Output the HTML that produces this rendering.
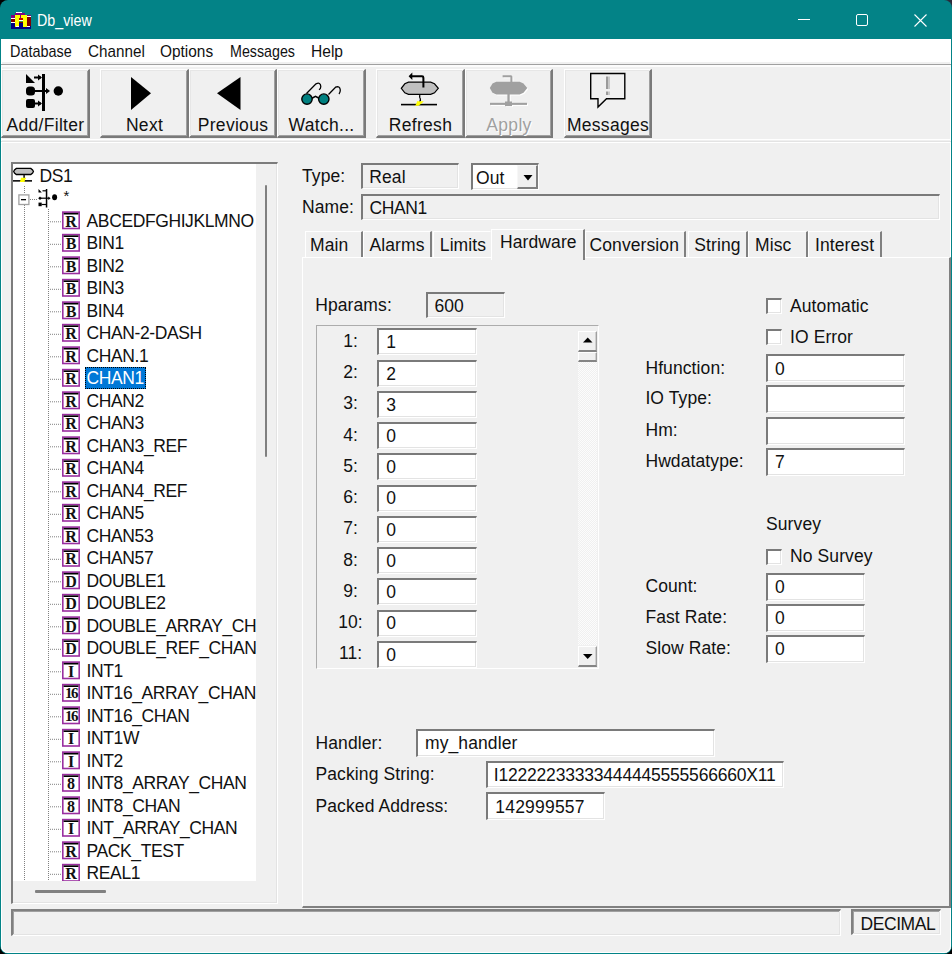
<!DOCTYPE html><html><head><meta charset="utf-8"><style>
*{margin:0;padding:0;box-sizing:border-box}
html,body{width:952px;height:954px;overflow:hidden;background:#000}
body{position:relative;font-family:"Liberation Sans",sans-serif;color:#111}
.a{position:absolute}
.t{position:absolute;white-space:nowrap}
.sk{border-style:solid;border-width:2px 1px 1px 2px;border-color:#7a7a7a #fff #fff #7a7a7a;box-shadow:inset -1px -1px 0 #e3e3e3}
.rz{border-style:solid;border-width:1px 2px 2px 1px;border-color:#fff #7a7a7a #7a7a7a #fff;background:#f0f0f0;box-shadow:inset 1px 1px 0 #e6e6e6, inset -1px -1px 0 #a0a0a0}
svg{position:absolute;overflow:visible}
</style></head><body>
<div class="a" style="left:930px;top:0px;width:22px;height:22px;background:#2b2a3a"></div>
<div class="a" style="left:0;top:0;width:952px;height:954px;background:#038387;border-radius:8px"></div>
<div class="a" style="left:1px;top:39px;width:950px;height:914px;background:#f0f0f0;border-radius:0 0 7px 7px"></div>
<div class="a" style="left:1px;top:39px;width:950px;height:914px;border-radius:0 0 7px 7px;box-shadow:inset 1px 0 0 #fff, inset -1px 0 0 #fff, inset 0 -1px 0 #fff"></div>
<svg style="left:11px;top:12px" width="20" height="17" viewBox="0 0 20 17" shape-rendering="crispEdges">
<rect x="0" y="5" width="20" height="6" fill="#800000"/>
<rect x="16" y="10" width="4" height="4" fill="#800000"/>
<rect x="0" y="11" width="16" height="6" fill="#000080"/>
<rect x="16" y="14" width="4" height="3" fill="#000080"/>
<rect x="4" y="1" width="10" height="2" fill="#800080"/>
<rect x="0" y="3" width="4" height="3" fill="#800080"/>
<rect x="16" y="3" width="4" height="2" fill="#800080"/>
<rect x="0" y="6" width="4" height="1" fill="#fff"/>
<rect x="16" y="4" width="4" height="1" fill="#fff"/>
<rect x="5" y="0" width="6" height="1" fill="#fff"/>
<rect x="4" y="3" width="4" height="12" fill="#ffff00"/>
<rect x="12" y="3" width="4" height="12" fill="#ffff00"/>
<rect x="8" y="3" width="4" height="3" fill="#ffff00"/>
<rect x="9" y="3" width="1" height="3" fill="#800080"/>
<rect x="8" y="6" width="4" height="2" fill="#c00000"/>
<rect x="8" y="8" width="4" height="1" fill="#fff"/>
<rect x="8" y="9" width="4" height="1" fill="#40a040"/>
<rect x="5" y="14" width="3" height="1" fill="#fff"/>
<rect x="16" y="14" width="3" height="1" fill="#fff"/>
<rect x="0" y="10" width="4" height="1" fill="#fff"/>
</svg>
<div class="t" style="left:37px;top:11px;font-size:15.7px;line-height:20px;letter-spacing:0px;color:#fff;transform:scaleX(0.91);transform-origin:0 0;">Db_view</div>
<div class="a" style="left:798px;top:19px;width:12px;height:1px;background:#fff"></div>
<div class="a" style="left:856px;top:14px;width:12px;height:12px;border:1px solid #fff;border-radius:2px"></div>
<svg style="left:914px;top:14px" width="13" height="13" viewBox="0 0 13 13"><path d="M0.5 0.5 L12.5 12.5 M12.5 0.5 L0.5 12.5" stroke="#fff" stroke-width="1.1"/></svg>
<div class="a" style="left:1px;top:39px;width:950px;height:23px;background:#fff"></div>
<div class="a" style="left:1px;top:64px;width:950px;height:1px;background:#a0a0a0"></div>
<div class="a" style="left:1px;top:65px;width:950px;height:2px;background:#fcfcfc"></div>
<div class="t" style="left:9.5px;top:41px;font-size:16.4px;line-height:20px;letter-spacing:0px;transform:scaleX(0.88);transform-origin:0 0;">Database</div>
<div class="t" style="left:87.5px;top:41px;font-size:16.4px;line-height:20px;letter-spacing:0px;transform:scaleX(0.93);transform-origin:0 0;">Channel</div>
<div class="t" style="left:159.5px;top:41px;font-size:16.4px;line-height:20px;letter-spacing:0px;transform:scaleX(0.94);transform-origin:0 0;">Options</div>
<div class="t" style="left:229.5px;top:41px;font-size:16.4px;line-height:20px;letter-spacing:0px;transform:scaleX(0.87);transform-origin:0 0;">Messages</div>
<div class="t" style="left:310.5px;top:41px;font-size:16.4px;line-height:20px;letter-spacing:0px;transform:scaleX(0.95);transform-origin:0 0;">Help</div>
<div class="a rz" style="left:1px;top:69px;width:89px;height:69px"></div>
<div class="t" style="left:1px;width:89px;text-align:center;top:115px;font-size:17.5px;line-height:20px;letter-spacing:0.3px;">Add/Filter</div>
<div class="a rz" style="left:100px;top:69px;width:89px;height:69px"></div>
<div class="t" style="left:100px;width:89px;text-align:center;top:115px;font-size:17.5px;line-height:20px;letter-spacing:0.3px;">Next</div>
<div class="a rz" style="left:189px;top:69px;width:88px;height:69px"></div>
<div class="t" style="left:189px;width:88px;text-align:center;top:115px;font-size:17.5px;line-height:20px;letter-spacing:0.3px;">Previous</div>
<div class="a rz" style="left:277px;top:69px;width:89px;height:69px"></div>
<div class="t" style="left:277px;width:89px;text-align:center;top:115px;font-size:17.5px;line-height:20px;letter-spacing:0.3px;">Watch...</div>
<div class="a rz" style="left:376px;top:69px;width:89px;height:69px"></div>
<div class="t" style="left:376px;width:89px;text-align:center;top:115px;font-size:17.5px;line-height:20px;letter-spacing:0.3px;">Refresh</div>
<div class="a rz" style="left:465px;top:69px;width:88px;height:69px"></div>
<div class="t" style="left:465px;width:88px;text-align:center;top:115px;font-size:17.5px;line-height:20px;letter-spacing:0.3px;color:#a0a0a0;text-shadow:1px 1px 0 #fff;">Apply</div>
<div class="a rz" style="left:564px;top:69px;width:88px;height:69px"></div>
<div class="t" style="left:564px;width:88px;text-align:center;top:115px;font-size:17.5px;line-height:20px;letter-spacing:0.3px;">Messages</div>
<div class="a" style="left:1px;top:139px;width:950px;height:1px;background:#fff"></div>
<div class="a" style="left:1px;top:141px;width:950px;height:1px;background:#e3e3e3"></div>
<div class="a" style="left:1px;top:142px;width:950px;height:1px;background:#fff"></div>
<svg style="left:0;top:0" width="952" height="954">
<path d="M26 74 L35 83 L26 83Z" fill="#000"/>
<path d="M34 77.5 H41" stroke="#000" stroke-width="2"/><path d="M38 74.5 L42 77.5 L38 80.5Z" fill="#000"/>
<rect x="42" y="74" width="3" height="37" fill="#000"/>
<rect x="26" y="86.5" width="9" height="9" rx="3.5" fill="#000"/>
<path d="M34 91 H48" stroke="#000" stroke-width="2"/><path d="M46 88 L50 91 L46 94Z" fill="#000"/>
<circle cx="58.3" cy="91" r="4.7" fill="#000"/>
<rect x="26" y="99" width="9" height="9" rx="2" fill="#000"/>
<path d="M34 103.5 H41" stroke="#000" stroke-width="2"/><path d="M38 100.5 L42 103.5 L38 106.5Z" fill="#000"/>
</svg>
<svg style="left:0;top:0" width="952" height="954"><path d="M131 77 L151 93.3 L131 110Z" fill="#000"/><path d="M240.5 77 L217 93.3 L240.5 110Z" fill="#000"/></svg>
<svg style="left:0;top:0" width="952" height="954">
<path d="M306.5 93.5 L316 83.8 Q320.5 81.8 320.8 86.5 Q320.8 88.8 319 89.8" stroke="#000" stroke-width="1.3" fill="none"/>
<path d="M328.5 94.5 L335.5 87.2 Q339.8 85.5 340.3 90 Q340.3 92.5 339 94" stroke="#000" stroke-width="1.3" fill="none"/>
<path d="M311.5 98.5 L315.5 96.3 L319.5 98.5" stroke="#000" stroke-width="1.5" fill="none"/>
<circle cx="307" cy="99.1" r="5.2" fill="#008080" stroke="#000" stroke-width="1.4"/>
<circle cx="323.8" cy="99.1" r="5.2" fill="#008080" stroke="#000" stroke-width="1.4"/>
</svg>
<svg style="left:0;top:0" width="952" height="954">
<path d="M408.5 82.2 H430.7 L434.5 83.8 L438.3 88.3 L434.5 92.8 L430.7 94.4 H408.5 L404.8 92.8 L401.3 88.3 L404.8 83.8Z" fill="#c0c0c0" stroke="#000" stroke-width="1.2"/>
<path d="M411 76.3 H422 Q423.4 76.3 423.4 77.7 V87.5" stroke="#000" stroke-width="2" fill="none"/>
<path d="M408.6 76.3 L412.3 72.6 L412.3 80Z" fill="#000"/>
<path d="M419.8 95 Q419.2 97.5 420.3 98.8 Q421 100.5 419.3 101.8" stroke="#000" stroke-width="1.3" fill="none"/>
<rect x="401" y="103.8" width="36" height="1.6" fill="#000"/>
<path d="M417 101.3 H423.8 L421.5 103.5 L418.5 105.8 H415 L416.5 103.5Z" fill="#ffff00"/>
</svg>
<svg style="left:1px;top:1px" width="952" height="954" fill="#fff"><path d="M496.3 81.8 H519.7 L523.5 83.5 L527.3 88.1 L523.5 92.8 L519.7 94.4 H496.3 L492.5 92.8 L489.8 88.1 L492.5 83.5Z"/>
<path d="M502.6 75.2 H510.9 Q512.4 75.2 512.4 76.7 V82.5 H510.4 V77.3 H502.6Z"/>
<rect x="507.4" y="94" width="2.3" height="9"/>
<rect x="490" y="102.8" width="37" height="2.1"/>
<rect x="505" y="101.5" width="7" height="4.6"/></svg>
<svg style="left:0;top:0" width="952" height="954" fill="#a0a0a0"><path d="M496.3 81.8 H519.7 L523.5 83.5 L527.3 88.1 L523.5 92.8 L519.7 94.4 H496.3 L492.5 92.8 L489.8 88.1 L492.5 83.5Z"/>
<path d="M502.6 75.2 H510.9 Q512.4 75.2 512.4 76.7 V82.5 H510.4 V77.3 H502.6Z"/>
<rect x="507.4" y="94" width="2.3" height="9"/>
<rect x="490" y="102.8" width="37" height="2.1"/>
<rect x="505" y="101.5" width="7" height="4.6"/></svg>
<svg style="left:0;top:0" width="952" height="954">
<path d="M590.7 73.5 H624.8 V98.7 H606.5 L598 107 V98.7 H590.7Z" fill="none" stroke="#000" stroke-width="1.4"/>
<rect x="606" y="76.5" width="2" height="12.5" fill="#9a9a9a"/><rect x="608" y="76.5" width="2" height="12.5" fill="#c8c8c8"/>
<rect x="606" y="91.5" width="2" height="3.5" fill="#9a9a9a"/><rect x="608" y="91.5" width="2" height="3.5" fill="#c8c8c8"/>
</svg>
<div class="a" style="left:11px;top:162px;width:267px;height:742px;border-style:solid;border-width:2px 1px 1px 2px;border-color:#7c7c7c #fff #fff #7c7c7c;box-shadow:inset -1px -1px 0 #e3e3e3;background:#f0f0f0"></div>
<div class="a" style="left:13px;top:164px;width:243px;height:717px;background:#fff"></div>
<div class="a" style="left:265px;top:185px;width:2.2px;height:272px;background:#808080;border-radius:1px"></div>
<div class="a" style="left:35px;top:890px;width:71px;height:2.5px;background:#808080;border-radius:1px"></div>
<div class="a" style="left:13px;top:164px;width:243px;height:717px;overflow:hidden">
<svg style="left:0;top:0" width="243" height="717"><path d="M11.5 22 V30 M11.5 41 V717" stroke="#808080" stroke-width="1" stroke-dasharray="1 1" fill="none"/><path d="M35.5 45 V717" stroke="#808080" stroke-width="1" stroke-dasharray="1 1"/><path d="M17 35.5 H25" stroke="#808080" stroke-width="1" stroke-dasharray="1 1"/><rect x="5.899999999999999" y="30.900000000000006" width="10" height="9.6" fill="#fff" stroke="#a0a0a0" stroke-width="1.3"/><rect x="8" y="35" width="5" height="1.3" fill="#000"/><path d="M37 57.8 H49" stroke="#808080" stroke-width="1" stroke-dasharray="1 1"/><rect x="49.8" y="48.1" width="16.4" height="16.4" fill="#fff" stroke="#9a2fa0" stroke-width="1.6"/><rect x="50.6" y="48.9" width="14.8" height="1.6" fill="#000"/><path d="M37 80.3 H49" stroke="#808080" stroke-width="1" stroke-dasharray="1 1"/><rect x="49.8" y="70.6" width="16.4" height="16.4" fill="#fff" stroke="#9a2fa0" stroke-width="1.6"/><rect x="50.6" y="71.4" width="14.8" height="1.6" fill="#000"/><path d="M37 102.8 H49" stroke="#808080" stroke-width="1" stroke-dasharray="1 1"/><rect x="49.8" y="93.1" width="16.4" height="16.4" fill="#fff" stroke="#9a2fa0" stroke-width="1.6"/><rect x="50.6" y="93.9" width="14.8" height="1.6" fill="#000"/><path d="M37 125.3 H49" stroke="#808080" stroke-width="1" stroke-dasharray="1 1"/><rect x="49.8" y="115.6" width="16.4" height="16.4" fill="#fff" stroke="#9a2fa0" stroke-width="1.6"/><rect x="50.6" y="116.4" width="14.8" height="1.6" fill="#000"/><path d="M37 147.8 H49" stroke="#808080" stroke-width="1" stroke-dasharray="1 1"/><rect x="49.8" y="138.1" width="16.4" height="16.4" fill="#fff" stroke="#9a2fa0" stroke-width="1.6"/><rect x="50.6" y="138.9" width="14.8" height="1.6" fill="#000"/><path d="M37 170.3 H49" stroke="#808080" stroke-width="1" stroke-dasharray="1 1"/><rect x="49.8" y="160.6" width="16.4" height="16.4" fill="#fff" stroke="#9a2fa0" stroke-width="1.6"/><rect x="50.6" y="161.4" width="14.8" height="1.6" fill="#000"/><path d="M37 192.8 H49" stroke="#808080" stroke-width="1" stroke-dasharray="1 1"/><rect x="49.8" y="183.1" width="16.4" height="16.4" fill="#fff" stroke="#9a2fa0" stroke-width="1.6"/><rect x="50.6" y="183.9" width="14.8" height="1.6" fill="#000"/><path d="M37 215.3 H49" stroke="#808080" stroke-width="1" stroke-dasharray="1 1"/><rect x="49.8" y="205.6" width="16.4" height="16.4" fill="#fff" stroke="#9a2fa0" stroke-width="1.6"/><rect x="50.6" y="206.4" width="14.8" height="1.6" fill="#000"/><path d="M37 237.8 H49" stroke="#808080" stroke-width="1" stroke-dasharray="1 1"/><rect x="49.8" y="228.1" width="16.4" height="16.4" fill="#fff" stroke="#9a2fa0" stroke-width="1.6"/><rect x="50.6" y="228.9" width="14.8" height="1.6" fill="#000"/><path d="M37 260.3 H49" stroke="#808080" stroke-width="1" stroke-dasharray="1 1"/><rect x="49.8" y="250.6" width="16.4" height="16.4" fill="#fff" stroke="#9a2fa0" stroke-width="1.6"/><rect x="50.6" y="251.4" width="14.8" height="1.6" fill="#000"/><path d="M37 282.8 H49" stroke="#808080" stroke-width="1" stroke-dasharray="1 1"/><rect x="49.8" y="273.1" width="16.4" height="16.4" fill="#fff" stroke="#9a2fa0" stroke-width="1.6"/><rect x="50.6" y="273.9" width="14.8" height="1.6" fill="#000"/><path d="M37 305.3 H49" stroke="#808080" stroke-width="1" stroke-dasharray="1 1"/><rect x="49.8" y="295.6" width="16.4" height="16.4" fill="#fff" stroke="#9a2fa0" stroke-width="1.6"/><rect x="50.6" y="296.4" width="14.8" height="1.6" fill="#000"/><path d="M37 327.8 H49" stroke="#808080" stroke-width="1" stroke-dasharray="1 1"/><rect x="49.8" y="318.1" width="16.4" height="16.4" fill="#fff" stroke="#9a2fa0" stroke-width="1.6"/><rect x="50.6" y="318.9" width="14.8" height="1.6" fill="#000"/><path d="M37 350.3 H49" stroke="#808080" stroke-width="1" stroke-dasharray="1 1"/><rect x="49.8" y="340.6" width="16.4" height="16.4" fill="#fff" stroke="#9a2fa0" stroke-width="1.6"/><rect x="50.6" y="341.4" width="14.8" height="1.6" fill="#000"/><path d="M37 372.8 H49" stroke="#808080" stroke-width="1" stroke-dasharray="1 1"/><rect x="49.8" y="363.1" width="16.4" height="16.4" fill="#fff" stroke="#9a2fa0" stroke-width="1.6"/><rect x="50.6" y="363.9" width="14.8" height="1.6" fill="#000"/><path d="M37 395.3 H49" stroke="#808080" stroke-width="1" stroke-dasharray="1 1"/><rect x="49.8" y="385.6" width="16.4" height="16.4" fill="#fff" stroke="#9a2fa0" stroke-width="1.6"/><rect x="50.6" y="386.4" width="14.8" height="1.6" fill="#000"/><path d="M37 417.8 H49" stroke="#808080" stroke-width="1" stroke-dasharray="1 1"/><rect x="49.8" y="408.1" width="16.4" height="16.4" fill="#fff" stroke="#9a2fa0" stroke-width="1.6"/><rect x="50.6" y="408.9" width="14.8" height="1.6" fill="#000"/><path d="M37 440.3 H49" stroke="#808080" stroke-width="1" stroke-dasharray="1 1"/><rect x="49.8" y="430.6" width="16.4" height="16.4" fill="#fff" stroke="#9a2fa0" stroke-width="1.6"/><rect x="50.6" y="431.4" width="14.8" height="1.6" fill="#000"/><path d="M37 462.8 H49" stroke="#808080" stroke-width="1" stroke-dasharray="1 1"/><rect x="49.8" y="453.1" width="16.4" height="16.4" fill="#fff" stroke="#9a2fa0" stroke-width="1.6"/><rect x="50.6" y="453.9" width="14.8" height="1.6" fill="#000"/><path d="M37 485.3 H49" stroke="#808080" stroke-width="1" stroke-dasharray="1 1"/><rect x="49.8" y="475.6" width="16.4" height="16.4" fill="#fff" stroke="#9a2fa0" stroke-width="1.6"/><rect x="50.6" y="476.4" width="14.8" height="1.6" fill="#000"/><path d="M37 507.8 H49" stroke="#808080" stroke-width="1" stroke-dasharray="1 1"/><rect x="49.8" y="498.1" width="16.4" height="16.4" fill="#fff" stroke="#9a2fa0" stroke-width="1.6"/><rect x="50.6" y="498.9" width="14.8" height="1.6" fill="#000"/><path d="M37 530.3 H49" stroke="#808080" stroke-width="1" stroke-dasharray="1 1"/><rect x="49.8" y="520.6" width="16.4" height="16.4" fill="#fff" stroke="#9a2fa0" stroke-width="1.6"/><rect x="50.6" y="521.4" width="14.8" height="1.6" fill="#000"/><path d="M37 552.8 H49" stroke="#808080" stroke-width="1" stroke-dasharray="1 1"/><rect x="49.8" y="543.1" width="16.4" height="16.4" fill="#fff" stroke="#9a2fa0" stroke-width="1.6"/><rect x="50.6" y="543.9" width="14.8" height="1.6" fill="#000"/><path d="M37 575.3 H49" stroke="#808080" stroke-width="1" stroke-dasharray="1 1"/><rect x="49.8" y="565.6" width="16.4" height="16.4" fill="#fff" stroke="#9a2fa0" stroke-width="1.6"/><rect x="50.6" y="566.4" width="14.8" height="1.6" fill="#000"/><path d="M37 597.8 H49" stroke="#808080" stroke-width="1" stroke-dasharray="1 1"/><rect x="49.8" y="588.1" width="16.4" height="16.4" fill="#fff" stroke="#9a2fa0" stroke-width="1.6"/><rect x="50.6" y="588.9" width="14.8" height="1.6" fill="#000"/><path d="M37 620.3 H49" stroke="#808080" stroke-width="1" stroke-dasharray="1 1"/><rect x="49.8" y="610.6" width="16.4" height="16.4" fill="#fff" stroke="#9a2fa0" stroke-width="1.6"/><rect x="50.6" y="611.4" width="14.8" height="1.6" fill="#000"/><path d="M37 642.8 H49" stroke="#808080" stroke-width="1" stroke-dasharray="1 1"/><rect x="49.8" y="633.1" width="16.4" height="16.4" fill="#fff" stroke="#9a2fa0" stroke-width="1.6"/><rect x="50.6" y="633.9" width="14.8" height="1.6" fill="#000"/><path d="M37 665.3 H49" stroke="#808080" stroke-width="1" stroke-dasharray="1 1"/><rect x="49.8" y="655.6" width="16.4" height="16.4" fill="#fff" stroke="#9a2fa0" stroke-width="1.6"/><rect x="50.6" y="656.4" width="14.8" height="1.6" fill="#000"/><path d="M37 687.8 H49" stroke="#808080" stroke-width="1" stroke-dasharray="1 1"/><rect x="49.8" y="678.1" width="16.4" height="16.4" fill="#fff" stroke="#9a2fa0" stroke-width="1.6"/><rect x="50.6" y="678.9" width="14.8" height="1.6" fill="#000"/><path d="M37 710.3 H49" stroke="#808080" stroke-width="1" stroke-dasharray="1 1"/><rect x="49.8" y="700.6" width="16.4" height="16.4" fill="#fff" stroke="#9a2fa0" stroke-width="1.6"/><rect x="50.6" y="701.4" width="14.8" height="1.6" fill="#000"/></svg>
<div class="t" style="left:49px;width:18px;text-align:center;top:48.8px;font-family:'Liberation Serif',serif;font-weight:bold;font-size:16px;line-height:17px;">R</div>
<div class="t" style="left:73.6px;top:47px;font-size:17.5px;line-height:20px;letter-spacing:-0.4px;">ABCEDFGHIJKLMNO</div>
<div class="t" style="left:49px;width:18px;text-align:center;top:71.3px;font-family:'Liberation Serif',serif;font-weight:bold;font-size:16px;line-height:17px;">B</div>
<div class="t" style="left:73.6px;top:69px;font-size:17.5px;line-height:20px;letter-spacing:-0.4px;">BIN1</div>
<div class="t" style="left:49px;width:18px;text-align:center;top:93.8px;font-family:'Liberation Serif',serif;font-weight:bold;font-size:16px;line-height:17px;">B</div>
<div class="t" style="left:73.6px;top:92px;font-size:17.5px;line-height:20px;letter-spacing:-0.4px;">BIN2</div>
<div class="t" style="left:49px;width:18px;text-align:center;top:116.3px;font-family:'Liberation Serif',serif;font-weight:bold;font-size:16px;line-height:17px;">B</div>
<div class="t" style="left:73.6px;top:114px;font-size:17.5px;line-height:20px;letter-spacing:-0.4px;">BIN3</div>
<div class="t" style="left:49px;width:18px;text-align:center;top:138.8px;font-family:'Liberation Serif',serif;font-weight:bold;font-size:16px;line-height:17px;">B</div>
<div class="t" style="left:73.6px;top:137px;font-size:17.5px;line-height:20px;letter-spacing:-0.4px;">BIN4</div>
<div class="t" style="left:49px;width:18px;text-align:center;top:161.3px;font-family:'Liberation Serif',serif;font-weight:bold;font-size:16px;line-height:17px;">R</div>
<div class="t" style="left:73.6px;top:159px;font-size:17.5px;line-height:20px;letter-spacing:-0.4px;">CHAN-2-DASH</div>
<div class="t" style="left:49px;width:18px;text-align:center;top:183.8px;font-family:'Liberation Serif',serif;font-weight:bold;font-size:16px;line-height:17px;">R</div>
<div class="t" style="left:73.6px;top:182px;font-size:17.5px;line-height:20px;letter-spacing:-0.4px;">CHAN.1</div>
<div class="t" style="left:49px;width:18px;text-align:center;top:206.3px;font-family:'Liberation Serif',serif;font-weight:bold;font-size:16px;line-height:17px;">R</div>
<div class="a" style="left:72px;top:202.5px;width:61px;height:22px;background:#0078d7;outline:1px dotted #000;outline-offset:-1px"></div>
<div class="t" style="left:73.6px;top:204px;font-size:17.5px;line-height:20px;letter-spacing:-0.4px;color:#fff;">CHAN1</div>
<div class="t" style="left:49px;width:18px;text-align:center;top:228.8px;font-family:'Liberation Serif',serif;font-weight:bold;font-size:16px;line-height:17px;">R</div>
<div class="t" style="left:73.6px;top:227px;font-size:17.5px;line-height:20px;letter-spacing:-0.4px;">CHAN2</div>
<div class="t" style="left:49px;width:18px;text-align:center;top:251.3px;font-family:'Liberation Serif',serif;font-weight:bold;font-size:16px;line-height:17px;">R</div>
<div class="t" style="left:73.6px;top:249px;font-size:17.5px;line-height:20px;letter-spacing:-0.4px;">CHAN3</div>
<div class="t" style="left:49px;width:18px;text-align:center;top:273.8px;font-family:'Liberation Serif',serif;font-weight:bold;font-size:16px;line-height:17px;">R</div>
<div class="t" style="left:73.6px;top:272px;font-size:17.5px;line-height:20px;letter-spacing:-0.4px;">CHAN3_REF</div>
<div class="t" style="left:49px;width:18px;text-align:center;top:296.3px;font-family:'Liberation Serif',serif;font-weight:bold;font-size:16px;line-height:17px;">R</div>
<div class="t" style="left:73.6px;top:294px;font-size:17.5px;line-height:20px;letter-spacing:-0.4px;">CHAN4</div>
<div class="t" style="left:49px;width:18px;text-align:center;top:318.8px;font-family:'Liberation Serif',serif;font-weight:bold;font-size:16px;line-height:17px;">R</div>
<div class="t" style="left:73.6px;top:317px;font-size:17.5px;line-height:20px;letter-spacing:-0.4px;">CHAN4_REF</div>
<div class="t" style="left:49px;width:18px;text-align:center;top:341.3px;font-family:'Liberation Serif',serif;font-weight:bold;font-size:16px;line-height:17px;">R</div>
<div class="t" style="left:73.6px;top:339px;font-size:17.5px;line-height:20px;letter-spacing:-0.4px;">CHAN5</div>
<div class="t" style="left:49px;width:18px;text-align:center;top:363.8px;font-family:'Liberation Serif',serif;font-weight:bold;font-size:16px;line-height:17px;">R</div>
<div class="t" style="left:73.6px;top:362px;font-size:17.5px;line-height:20px;letter-spacing:-0.4px;">CHAN53</div>
<div class="t" style="left:49px;width:18px;text-align:center;top:386.3px;font-family:'Liberation Serif',serif;font-weight:bold;font-size:16px;line-height:17px;">R</div>
<div class="t" style="left:73.6px;top:384px;font-size:17.5px;line-height:20px;letter-spacing:-0.4px;">CHAN57</div>
<div class="t" style="left:49px;width:18px;text-align:center;top:408.8px;font-family:'Liberation Serif',serif;font-weight:bold;font-size:16px;line-height:17px;">D</div>
<div class="t" style="left:73.6px;top:407px;font-size:17.5px;line-height:20px;letter-spacing:-0.4px;">DOUBLE1</div>
<div class="t" style="left:49px;width:18px;text-align:center;top:431.3px;font-family:'Liberation Serif',serif;font-weight:bold;font-size:16px;line-height:17px;">D</div>
<div class="t" style="left:73.6px;top:429px;font-size:17.5px;line-height:20px;letter-spacing:-0.4px;">DOUBLE2</div>
<div class="t" style="left:49px;width:18px;text-align:center;top:453.8px;font-family:'Liberation Serif',serif;font-weight:bold;font-size:16px;line-height:17px;">D</div>
<div class="t" style="left:73.6px;top:452px;font-size:17.5px;line-height:20px;letter-spacing:-0.4px;">DOUBLE_ARRAY_CHAN</div>
<div class="t" style="left:49px;width:18px;text-align:center;top:476.3px;font-family:'Liberation Serif',serif;font-weight:bold;font-size:16px;line-height:17px;">D</div>
<div class="t" style="left:73.6px;top:474px;font-size:17.5px;line-height:20px;letter-spacing:-0.4px;">DOUBLE_REF_CHAN</div>
<div class="t" style="left:49px;width:18px;text-align:center;top:498.8px;font-family:'Liberation Serif',serif;font-weight:bold;font-size:16px;line-height:17px;">I</div>
<div class="t" style="left:73.6px;top:497px;font-size:17.5px;line-height:20px;letter-spacing:-0.4px;">INT1</div>
<div class="t" style="left:49px;width:18px;text-align:center;top:521.3px;font-family:'Liberation Serif',serif;font-weight:bold;font-size:15px;line-height:17px;letter-spacing:-1.5px;">16</div>
<div class="t" style="left:73.6px;top:519px;font-size:17.5px;line-height:20px;letter-spacing:-0.4px;">INT16_ARRAY_CHAN</div>
<div class="t" style="left:49px;width:18px;text-align:center;top:543.8px;font-family:'Liberation Serif',serif;font-weight:bold;font-size:15px;line-height:17px;letter-spacing:-1.5px;">16</div>
<div class="t" style="left:73.6px;top:542px;font-size:17.5px;line-height:20px;letter-spacing:-0.4px;">INT16_CHAN</div>
<div class="t" style="left:49px;width:18px;text-align:center;top:566.3px;font-family:'Liberation Serif',serif;font-weight:bold;font-size:16px;line-height:17px;">I</div>
<div class="t" style="left:73.6px;top:564px;font-size:17.5px;line-height:20px;letter-spacing:-0.4px;">INT1W</div>
<div class="t" style="left:49px;width:18px;text-align:center;top:588.8px;font-family:'Liberation Serif',serif;font-weight:bold;font-size:16px;line-height:17px;">I</div>
<div class="t" style="left:73.6px;top:587px;font-size:17.5px;line-height:20px;letter-spacing:-0.4px;">INT2</div>
<div class="t" style="left:49px;width:18px;text-align:center;top:611.3px;font-family:'Liberation Serif',serif;font-weight:bold;font-size:16px;line-height:17px;">8</div>
<div class="t" style="left:73.6px;top:609px;font-size:17.5px;line-height:20px;letter-spacing:-0.4px;">INT8_ARRAY_CHAN</div>
<div class="t" style="left:49px;width:18px;text-align:center;top:633.8px;font-family:'Liberation Serif',serif;font-weight:bold;font-size:16px;line-height:17px;">8</div>
<div class="t" style="left:73.6px;top:632px;font-size:17.5px;line-height:20px;letter-spacing:-0.4px;">INT8_CHAN</div>
<div class="t" style="left:49px;width:18px;text-align:center;top:656.3px;font-family:'Liberation Serif',serif;font-weight:bold;font-size:16px;line-height:17px;">I</div>
<div class="t" style="left:73.6px;top:654px;font-size:17.5px;line-height:20px;letter-spacing:-0.4px;">INT_ARRAY_CHAN</div>
<div class="t" style="left:49px;width:18px;text-align:center;top:678.8px;font-family:'Liberation Serif',serif;font-weight:bold;font-size:16px;line-height:17px;">R</div>
<div class="t" style="left:73.6px;top:677px;font-size:17.5px;line-height:20px;letter-spacing:-0.4px;">PACK_TEST</div>
<div class="t" style="left:49px;width:18px;text-align:center;top:701.3px;font-family:'Liberation Serif',serif;font-weight:bold;font-size:16px;line-height:17px;">R</div>
<div class="t" style="left:73.6px;top:699px;font-size:17.5px;line-height:20px;letter-spacing:-0.4px;">REAL1</div>
</div>
<svg style="left:0;top:0" width="952" height="954">
<path d="M16.3 168.4 H30.8 L32.6 170 L33.4 171.5 L32.6 173 L30.8 174.5 H16.3 L14.5 173 L13.7 171.5 L14.5 170Z" fill="#c0c0c0" stroke="#000" stroke-width="1.3"/>
<rect x="23.3" y="175" width="1.6" height="3.5" fill="#222"/>
<rect x="13" y="180" width="19" height="1.7" fill="#1a1a1a"/>
<path d="M21 177.8 H26.2 L25 180 L24.5 182 H19.8 L20.5 180Z" fill="#ffff00"/>
</svg>
<div class="t" style="left:39.6px;top:166px;font-size:17.5px;line-height:20px;letter-spacing:-0.4px;">DS1</div>
<svg style="left:0;top:0" width="952" height="954">
<path d="M38.5 189 L41.8 192.6 L38.5 192.6Z" fill="#000"/><path d="M42.5 190.8 H46" stroke="#000" stroke-width="1.2"/>
<rect x="45.8" y="189" width="1.5" height="18.5" fill="#000"/>
<path d="M38.2 198.2 L40 196.4 L41.8 198.2 L40 200Z" fill="#000"/>
<path d="M41 198.2 H49" stroke="#000" stroke-width="1.2"/><path d="M48.3 196.4 L50.6 198.2 L48.3 200Z" fill="#000"/>
<ellipse cx="54.6" cy="197.2" rx="2.5" ry="3" fill="#000"/>
<rect x="38.5" y="202.6" width="3.2" height="3.6" fill="#000"/><path d="M41.5 204.5 H46" stroke="#000" stroke-width="1.2"/>
</svg>
<div class="t" style="left:63.5px;top:186px;font-size:15px;line-height:20px;letter-spacing:0.1px;">*</div>
<div class="t" style="left:302px;top:166px;font-size:17.5px;line-height:20px;letter-spacing:0.1px;">Type:</div>
<div class="a sk" style="left:361px;top:163px;width:98px;height:26px;background:#f0f0f0"></div>
<div class="t" style="left:369.3px;top:167px;font-size:17.5px;line-height:20px;letter-spacing:0.1px;">Real</div>
<div class="a sk" style="left:471px;top:163px;width:68px;height:27px;background:#fff"></div>
<div class="t" style="left:476px;top:168px;font-size:17.5px;line-height:20px;letter-spacing:0.1px;">Out</div>
<div class="a" style="left:517px;top:165px;width:21px;height:24px;border-style:solid;border-width:1px 2px 2px 1px;border-color:#f7f7f7 #808080 #808080 #f7f7f7;background:#f0f0f0"></div>
<svg style="left:0;top:0" width="952" height="954"><path d="M523.5 175 H532.5 L528 180.5Z" fill="#000"/></svg>
<div class="t" style="left:302px;top:197px;font-size:17.5px;line-height:20px;letter-spacing:0.1px;">Name:</div>
<div class="a sk" style="left:361px;top:194px;width:579px;height:26px;background:#f0f0f0"></div>
<div class="t" style="left:369.6px;top:198px;font-size:17.5px;line-height:20px;letter-spacing:-0.4px;">CHAN1</div>
<div class="a" style="left:302px;top:257px;width:649px;height:651px;border-style:solid;border-width:1px 2px 2px 1px;border-color:#fff #808080 #808080 #fff;background:#f0f0f0"></div>
<div class="a" style="left:305px;top:231px;width:58px;height:26px;border-style:solid;border-width:1px 2px 0 1px;border-color:#fff #808080 #fff #fff"></div>
<div class="t" style="left:310px;top:235px;font-size:17.5px;line-height:20px;letter-spacing:0.1px;">Main</div>
<div class="a" style="left:363px;top:231px;width:69px;height:26px;border-style:solid;border-width:1px 2px 0 1px;border-color:#fff #808080 #fff #fff"></div>
<div class="t" style="left:369.5px;top:235px;font-size:17.5px;line-height:20px;letter-spacing:0.1px;">Alarms</div>
<div class="a" style="left:433px;top:231px;width:58px;height:26px;border-style:solid;border-width:1px 1px 0 1px;border-color:#fff #f0f0f0 #fff #fff"></div>
<div class="t" style="left:439.8px;top:235px;font-size:17.5px;line-height:20px;letter-spacing:0.1px;">Limits</div>
<div class="a" style="left:585px;top:231px;width:101px;height:26px;border-style:solid;border-width:1px 2px 0 1px;border-color:#fff #808080 #fff #fff"></div>
<div class="t" style="left:589.5px;top:235px;font-size:17.5px;line-height:20px;letter-spacing:0.1px;">Conversion</div>
<div class="a" style="left:688px;top:231px;width:60px;height:26px;border-style:solid;border-width:1px 2px 0 1px;border-color:#fff #808080 #fff #fff"></div>
<div class="t" style="left:694.3px;top:235px;font-size:17.5px;line-height:20px;letter-spacing:0.1px;">String</div>
<div class="a" style="left:748px;top:231px;width:60px;height:26px;border-style:solid;border-width:1px 2px 0 1px;border-color:#fff #808080 #fff #fff"></div>
<div class="t" style="left:755px;top:235px;font-size:17.5px;line-height:20px;letter-spacing:0.1px;">Misc</div>
<div class="a" style="left:808px;top:231px;width:74px;height:26px;border-style:solid;border-width:1px 2px 0 1px;border-color:#fff #808080 #fff #fff"></div>
<div class="t" style="left:815px;top:235px;font-size:17.5px;line-height:20px;letter-spacing:0.1px;">Interest</div>
<div class="a" style="left:491px;top:229px;width:94px;height:31px;border-style:solid;border-width:1px 2px 0 1px;border-color:#fff #808080 #fff #fff;background:#f0f0f0"></div>
<div class="t" style="left:500px;top:232px;font-size:17.5px;line-height:20px;letter-spacing:0.1px;">Hardware</div>
<div class="t" style="left:315.2px;top:295px;font-size:17.5px;line-height:20px;letter-spacing:0.1px;">Hparams:</div>
<div class="a sk" style="left:426px;top:292px;width:79px;height:26px;background:#f0f0f0"></div>
<div class="t" style="left:434.5px;top:296px;font-size:17.5px;line-height:20px;letter-spacing:0px;">600</div>
<div class="a" style="left:316px;top:325px;width:283px;height:344px;border-style:solid;border-width:1px 1px 1px 1px;border-color:#acacac #fff #fff #acacac"></div>
<div class="t" style="left:330.5px;width:40.0px;text-align:center;top:331px;font-size:17.5px;line-height:20px;letter-spacing:0px;">1:</div>
<div class="a sk" style="left:377px;top:328px;width:100px;height:27px;background:#fff"></div>
<div class="t" style="left:386.2px;top:332px;font-size:17.5px;line-height:20px;letter-spacing:0px;">1</div>
<div class="t" style="left:330.5px;width:40.0px;text-align:center;top:362px;font-size:17.5px;line-height:20px;letter-spacing:0px;">2:</div>
<div class="a sk" style="left:377px;top:360px;width:100px;height:27px;background:#fff"></div>
<div class="t" style="left:386.2px;top:364px;font-size:17.5px;line-height:20px;letter-spacing:0px;">2</div>
<div class="t" style="left:330.5px;width:40.0px;text-align:center;top:393px;font-size:17.5px;line-height:20px;letter-spacing:0px;">3:</div>
<div class="a sk" style="left:377px;top:391px;width:100px;height:27px;background:#fff"></div>
<div class="t" style="left:386.2px;top:395px;font-size:17.5px;line-height:20px;letter-spacing:0px;">3</div>
<div class="t" style="left:330.5px;width:40.0px;text-align:center;top:425px;font-size:17.5px;line-height:20px;letter-spacing:0px;">4:</div>
<div class="a sk" style="left:377px;top:422px;width:100px;height:27px;background:#fff"></div>
<div class="t" style="left:386.2px;top:426px;font-size:17.5px;line-height:20px;letter-spacing:0px;">0</div>
<div class="t" style="left:330.5px;width:40.0px;text-align:center;top:456px;font-size:17.5px;line-height:20px;letter-spacing:0px;">5:</div>
<div class="a sk" style="left:377px;top:453px;width:100px;height:27px;background:#fff"></div>
<div class="t" style="left:386.2px;top:457px;font-size:17.5px;line-height:20px;letter-spacing:0px;">0</div>
<div class="t" style="left:330.5px;width:40.0px;text-align:center;top:487px;font-size:17.5px;line-height:20px;letter-spacing:0px;">6:</div>
<div class="a sk" style="left:377px;top:485px;width:100px;height:27px;background:#fff"></div>
<div class="t" style="left:386.2px;top:488px;font-size:17.5px;line-height:20px;letter-spacing:0px;">0</div>
<div class="t" style="left:330.5px;width:40.0px;text-align:center;top:518px;font-size:17.5px;line-height:20px;letter-spacing:0px;">7:</div>
<div class="a sk" style="left:377px;top:516px;width:100px;height:27px;background:#fff"></div>
<div class="t" style="left:386.2px;top:520px;font-size:17.5px;line-height:20px;letter-spacing:0px;">0</div>
<div class="t" style="left:330.5px;width:40.0px;text-align:center;top:550px;font-size:17.5px;line-height:20px;letter-spacing:0px;">8:</div>
<div class="a sk" style="left:377px;top:547px;width:100px;height:27px;background:#fff"></div>
<div class="t" style="left:386.2px;top:551px;font-size:17.5px;line-height:20px;letter-spacing:0px;">0</div>
<div class="t" style="left:330.5px;width:40.0px;text-align:center;top:581px;font-size:17.5px;line-height:20px;letter-spacing:0px;">9:</div>
<div class="a sk" style="left:377px;top:578px;width:100px;height:27px;background:#fff"></div>
<div class="t" style="left:386.2px;top:582px;font-size:17.5px;line-height:20px;letter-spacing:0px;">0</div>
<div class="t" style="left:330.5px;width:40.0px;text-align:center;top:612px;font-size:17.5px;line-height:20px;letter-spacing:0px;">10:</div>
<div class="a sk" style="left:377px;top:610px;width:100px;height:27px;background:#fff"></div>
<div class="t" style="left:386.2px;top:613px;font-size:17.5px;line-height:20px;letter-spacing:0px;">0</div>
<div class="t" style="left:330.5px;width:40.0px;text-align:center;top:643px;font-size:17.5px;line-height:20px;letter-spacing:0px;">11:</div>
<div class="a sk" style="left:377px;top:641px;width:100px;height:27px;background:#fff"></div>
<div class="t" style="left:386.2px;top:645px;font-size:17.5px;line-height:20px;letter-spacing:0px;">0</div>
<div class="a" style="left:578px;top:362px;width:19px;height:283px;background-color:#f7f7f7;background-image:repeating-conic-gradient(#f0f0f0 0 25%, #fcfcfc 0 50%);background-size:2px 2px"></div>
<div class="a" style="left:578px;top:331px;width:19px;height:21px;border-style:solid;border-width:1px 1px 2px 1px;border-color:#fff #a0a0a0 #858585 #fff;box-shadow:inset -1px 0 0 #d0d0d0;background:#f0f0f0"></div>
<div class="a" style="left:578px;top:352px;width:19px;height:10px;border-style:solid;border-width:1px 1px 2px 1px;border-color:#fff #a0a0a0 #858585 #fff;box-shadow:inset -1px 0 0 #d0d0d0;background:#f0f0f0"></div>
<div class="a" style="left:578px;top:646px;width:19px;height:21px;border-style:solid;border-width:1px 1px 2px 1px;border-color:#fff #a0a0a0 #858585 #fff;box-shadow:inset -1px 0 0 #d0d0d0;background:#f0f0f0"></div>
<svg style="left:0;top:0" width="952" height="954"><path d="M583 342.5 H592.5 L587.7 337.5Z" fill="#000"/><path d="M583 654 H592.5 L587.7 659Z" fill="#000"/></svg>
<div class="a sk" style="left:766px;top:298px;width:16px;height:16px;border-width:2px 1px 1px 2px;border-color:#7a7a7a #fff #fff #7a7a7a;background:#fff"></div>
<div class="t" style="left:790px;top:296px;font-size:17.5px;line-height:20px;letter-spacing:0.1px;">Automatic</div>
<div class="a sk" style="left:766px;top:329px;width:16px;height:16px;border-width:2px 1px 1px 2px;border-color:#7a7a7a #fff #fff #7a7a7a;background:#fff"></div>
<div class="t" style="left:790px;top:327px;font-size:17.5px;line-height:20px;letter-spacing:0.1px;">IO Error</div>
<div class="t" style="left:645.4px;top:358px;font-size:17.5px;line-height:20px;letter-spacing:0.1px;">Hfunction:</div>
<div class="a sk" style="left:766px;top:354px;width:139px;height:28px;background:#fff"></div>
<div class="t" style="left:775px;top:359px;font-size:17.5px;line-height:20px;letter-spacing:0px;">0</div>
<div class="t" style="left:645.4px;top:388px;font-size:17.5px;line-height:20px;letter-spacing:0.1px;">IO Type:</div>
<div class="a sk" style="left:766px;top:385px;width:139px;height:28px;background:#fff"></div>
<div class="t" style="left:645.4px;top:420px;font-size:17.5px;line-height:20px;letter-spacing:0.1px;">Hm:</div>
<div class="a sk" style="left:766px;top:417px;width:139px;height:28px;background:#fff"></div>
<div class="t" style="left:645.4px;top:451px;font-size:17.5px;line-height:20px;letter-spacing:0.1px;">Hwdatatype:</div>
<div class="a sk" style="left:766px;top:448px;width:139px;height:28px;background:#fff"></div>
<div class="t" style="left:775px;top:452px;font-size:17.5px;line-height:20px;letter-spacing:0px;">7</div>
<div class="t" style="left:766px;top:514px;font-size:17.5px;line-height:20px;letter-spacing:0.1px;">Survey</div>
<div class="a sk" style="left:766px;top:548.5px;width:16px;height:16px;border-width:2px 1px 1px 2px;border-color:#7a7a7a #fff #fff #7a7a7a;background:#fff"></div>
<div class="t" style="left:790px;top:546px;font-size:17.5px;line-height:20px;letter-spacing:0.1px;">No Survey</div>
<div class="t" style="left:645.4px;top:576px;font-size:17.5px;line-height:20px;letter-spacing:0.1px;">Count:</div>
<div class="a sk" style="left:766px;top:573px;width:99px;height:28px;background:#fff"></div>
<div class="t" style="left:775px;top:577px;font-size:17.5px;line-height:20px;letter-spacing:0px;">0</div>
<div class="t" style="left:645.4px;top:607px;font-size:17.5px;line-height:20px;letter-spacing:0.1px;">Fast Rate:</div>
<div class="a sk" style="left:766px;top:604px;width:99px;height:28px;background:#fff"></div>
<div class="t" style="left:775px;top:608px;font-size:17.5px;line-height:20px;letter-spacing:0px;">0</div>
<div class="t" style="left:645.4px;top:638px;font-size:17.5px;line-height:20px;letter-spacing:0.1px;">Slow Rate:</div>
<div class="a sk" style="left:766px;top:635px;width:99px;height:28px;background:#fff"></div>
<div class="t" style="left:775px;top:639px;font-size:17.5px;line-height:20px;letter-spacing:0px;">0</div>
<div class="t" style="left:315.5px;top:733px;font-size:17.5px;line-height:20px;letter-spacing:0.1px;">Handler:</div>
<div class="a sk" style="left:416px;top:729px;width:299px;height:28px;background:#fff"></div>
<div class="t" style="left:425px;top:733px;font-size:17.5px;line-height:20px;letter-spacing:0.1px;">my_handler</div>
<div class="t" style="left:315.5px;top:764px;font-size:17.5px;line-height:20px;letter-spacing:0.1px;">Packing String:</div>
<div class="a sk" style="left:486px;top:761px;width:298px;height:27px;background:#fff"></div>
<div class="t" style="left:493.8px;top:765px;font-size:17.5px;line-height:20px;letter-spacing:-0.2px;">I12222233333444445555566660X11</div>
<div class="t" style="left:315.5px;top:796px;font-size:17.5px;line-height:20px;letter-spacing:0.1px;">Packed Address:</div>
<div class="a sk" style="left:486px;top:792px;width:119px;height:28px;background:#fff"></div>
<div class="t" style="left:495.3px;top:797px;font-size:17.5px;line-height:20px;letter-spacing:0.2px;">142999557</div>
<div class="a sk" style="left:11px;top:909px;width:830px;height:27px;border-color:#808080 #fff #fff #808080;box-shadow:inset -1px -1px 0 #e3e3e3, inset 1px 1px 0 #a0a0a0"></div>
<div class="a sk" style="left:851px;top:909px;width:90px;height:26px;border-color:#808080 #fff #fff #808080;box-shadow:inset -1px -1px 0 #e3e3e3, inset 1px 1px 0 #a0a0a0"></div>
<div class="t" style="left:860.4px;top:914px;font-size:17.5px;line-height:20px;letter-spacing:-0.4px;">DECIMAL</div>
</body></html>
